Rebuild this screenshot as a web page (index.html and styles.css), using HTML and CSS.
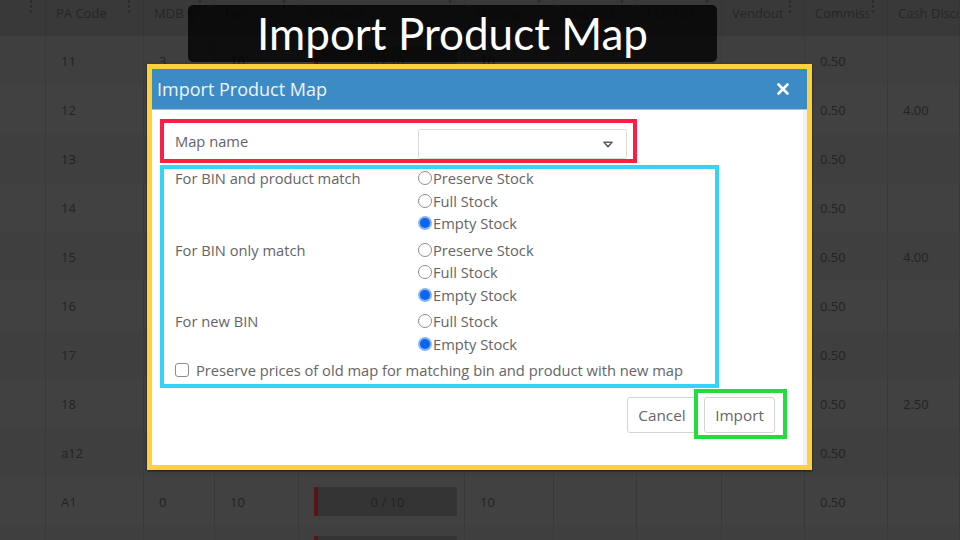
FILE: index.html
```html
<!DOCTYPE html>
<html>
<head>
<meta charset="utf-8">
<link rel="stylesheet" href="styles.css">
</head>
<body>
<div class="grid">
  <div class="row head">
    <div class="cell"><span class="lbl"></span><svg class="kebab" viewBox="0 0 4 14"><circle cx="2" cy="1.5" r="1.3"/><circle cx="2" cy="6.5" r="1.3"/><circle cx="2" cy="11.5" r="1.3"/></svg></div>
    <div class="cell"><span class="lbl">PA Code</span><svg class="kebab" viewBox="0 0 4 14"><circle cx="2" cy="1.5" r="1.3"/><circle cx="2" cy="6.5" r="1.3"/><circle cx="2" cy="11.5" r="1.3"/></svg></div>
    <div class="cell"><span class="lbl">MDB Qty</span><svg class="kebab" viewBox="0 0 4 14"><circle cx="2" cy="1.5" r="1.3"/><circle cx="2" cy="6.5" r="1.3"/><circle cx="2" cy="11.5" r="1.3"/></svg></div>
    <div class="cell"><span class="lbl">Par</span><svg class="kebab" viewBox="0 0 4 14"><circle cx="2" cy="1.5" r="1.3"/><circle cx="2" cy="6.5" r="1.3"/><circle cx="2" cy="11.5" r="1.3"/></svg></div>
    <div class="cell"><span class="lbl">On Hand</span><svg class="kebab" viewBox="0 0 4 14"><circle cx="2" cy="1.5" r="1.3"/><circle cx="2" cy="6.5" r="1.3"/><circle cx="2" cy="11.5" r="1.3"/></svg></div>
    <div class="cell"><span class="lbl">Missing</span><svg class="kebab" viewBox="0 0 4 14"><circle cx="2" cy="1.5" r="1.3"/><circle cx="2" cy="6.5" r="1.3"/><circle cx="2" cy="11.5" r="1.3"/></svg></div>
    <div class="cell"><span class="lbl">Last Pick</span><svg class="kebab" viewBox="0 0 4 14"><circle cx="2" cy="1.5" r="1.3"/><circle cx="2" cy="6.5" r="1.3"/><circle cx="2" cy="11.5" r="1.3"/></svg></div>
    <div class="cell"><span class="lbl">Min Pick</span><svg class="kebab" viewBox="0 0 4 14"><circle cx="2" cy="1.5" r="1.3"/><circle cx="2" cy="6.5" r="1.3"/><circle cx="2" cy="11.5" r="1.3"/></svg></div>
    <div class="cell"><span class="lbl">Vendout</span><svg class="kebab" viewBox="0 0 4 14"><circle cx="2" cy="1.5" r="1.3"/><circle cx="2" cy="6.5" r="1.3"/><circle cx="2" cy="11.5" r="1.3"/></svg></div>
    <div class="cell"><span class="lbl">Commission</span><svg class="kebab" viewBox="0 0 4 14"><circle cx="2" cy="1.5" r="1.3"/><circle cx="2" cy="6.5" r="1.3"/><circle cx="2" cy="11.5" r="1.3"/></svg></div>
    <div class="cell"><span class="lbl">Cash Discount</span></div>
  </div>

  <div class="row"><div class="cell"></div><div class="cell">11</div><div class="cell">3</div><div class="cell">10</div><div class="cell"><div class="bar">0 / 10</div></div><div class="cell">10</div><div class="cell"></div><div class="cell"></div><div class="cell"></div><div class="cell">0.50</div><div class="cell"></div></div>
  <div class="row alt"><div class="cell"></div><div class="cell">12</div><div class="cell">0</div><div class="cell">10</div><div class="cell"><div class="bar">0 / 10</div></div><div class="cell">10</div><div class="cell"></div><div class="cell"></div><div class="cell"></div><div class="cell">0.50</div><div class="cell">4.00</div></div>
  <div class="row"><div class="cell"></div><div class="cell">13</div><div class="cell">0</div><div class="cell">10</div><div class="cell"><div class="bar">0 / 10</div></div><div class="cell">10</div><div class="cell"></div><div class="cell"></div><div class="cell"></div><div class="cell">0.50</div><div class="cell"></div></div>
  <div class="row alt"><div class="cell"></div><div class="cell">14</div><div class="cell">0</div><div class="cell">10</div><div class="cell"><div class="bar">0 / 10</div></div><div class="cell">10</div><div class="cell"></div><div class="cell"></div><div class="cell"></div><div class="cell">0.50</div><div class="cell"></div></div>
  <div class="row"><div class="cell"></div><div class="cell">15</div><div class="cell">0</div><div class="cell">10</div><div class="cell"><div class="bar">0 / 10</div></div><div class="cell">10</div><div class="cell"></div><div class="cell"></div><div class="cell"></div><div class="cell">0.50</div><div class="cell">4.00</div></div>
  <div class="row alt"><div class="cell"></div><div class="cell">16</div><div class="cell">0</div><div class="cell">10</div><div class="cell"><div class="bar">0 / 10</div></div><div class="cell">10</div><div class="cell"></div><div class="cell"></div><div class="cell"></div><div class="cell">0.50</div><div class="cell"></div></div>
  <div class="row"><div class="cell"></div><div class="cell">17</div><div class="cell">0</div><div class="cell">10</div><div class="cell"><div class="bar">0 / 10</div></div><div class="cell">10</div><div class="cell"></div><div class="cell"></div><div class="cell"></div><div class="cell">0.50</div><div class="cell"></div></div>
  <div class="row alt"><div class="cell"></div><div class="cell">18</div><div class="cell">0</div><div class="cell">10</div><div class="cell"><div class="bar">0 / 10</div></div><div class="cell">10</div><div class="cell"></div><div class="cell"></div><div class="cell"></div><div class="cell">0.50</div><div class="cell">2.50</div></div>
  <div class="row"><div class="cell"></div><div class="cell">a12</div><div class="cell">0</div><div class="cell">10</div><div class="cell"><div class="bar">0 / 10</div></div><div class="cell">10</div><div class="cell"></div><div class="cell"></div><div class="cell"></div><div class="cell">0.50</div><div class="cell"></div></div>
  <div class="row alt"><div class="cell"></div><div class="cell">A1</div><div class="cell">0</div><div class="cell">10</div><div class="cell"><div class="bar">0 / 10</div></div><div class="cell">10</div><div class="cell"></div><div class="cell"></div><div class="cell"></div><div class="cell">0.50</div><div class="cell"></div></div>
  <div class="row"><div class="cell"></div><div class="cell"></div><div class="cell"></div><div class="cell"></div><div class="cell"><div class="bar"></div></div><div class="cell"></div><div class="cell"></div><div class="cell"></div><div class="cell"></div><div class="cell"></div><div class="cell"></div></div>
</div>

<div class="banner">Import Product Map</div>

<div class="dialog">
  <div class="dlg-head">
    <span class="dlg-title">Import Product Map</span>
    <svg class="close" viewBox="0 0 12 12"><path d="M1.5 1.5 L10.5 10.5 M10.5 1.5 L1.5 10.5"/></svg>
  </div>
  <div class="dlg-body">
    <div class="box-red">
      <div class="field-label">Map name</div>
      <div class="select">
        <svg class="caret" viewBox="0 0 10 7"><path d="M1 1.2 H9 L5 5.8 Z"/></svg>
      </div>
    </div>
    <div class="box-cyan">
      <div class="group first">
        <div class="glabel">For BIN and product match</div>
        <div class="opts">
          <div class="opt"><span class="radio"></span>Preserve Stock</div>
          <div class="opt"><span class="radio"></span>Full Stock</div>
          <div class="opt"><span class="radio on"></span>Empty Stock</div>
        </div>
      </div>
      <div class="group">
        <div class="glabel">For BIN only match</div>
        <div class="opts">
          <div class="opt"><span class="radio"></span>Preserve Stock</div>
          <div class="opt"><span class="radio"></span>Full Stock</div>
          <div class="opt"><span class="radio on"></span>Empty Stock</div>
        </div>
      </div>
      <div class="group">
        <div class="glabel">For new BIN</div>
        <div class="opts">
          <div class="opt"><span class="radio"></span>Full Stock</div>
          <div class="opt"><span class="radio on"></span>Empty Stock</div>
        </div>
      </div>
      <div class="check-row"><span class="checkbox"></span>Preserve prices of old map for matching bin and product with new map</div>
    </div>
    <div class="footer">
      <button class="btn">Cancel</button>
      <span class="mark-green"><button class="btn btn-import">Import</button></span>
    </div>
  </div>
</div>
</body>
</html>
```

FILE: styles.css
```css
html, body {
  margin: 0;
  padding: 0;
}
body {
  width: 960px;
  height: 540px;
  overflow: hidden;
  background: #3f3f3f;
  font-family: "Open Sans", "Noto Sans", sans-serif;
  position: relative;
}

/* background table */
.grid {
  display: flex;
  flex-direction: column;
  height: 540px;
  overflow: hidden;
}
.row {
  display: grid;
  grid-template-columns: 46px 98px 71px 84px 166px 89px 83px 85px 83px 83px 72px;
  height: 49px;
  flex: none;
  background: #3f3f3f;
}
.row.alt {
  background: #414141;
}
.row.head {
  height: 36px;
  background: #393939;
}
.cell {
  border-right: 1px solid #393939;
  display: flex;
  align-items: center;
  padding-left: 15px;
  font-size: 13px;
  color: #232323;
  white-space: nowrap;
  overflow: hidden;
  min-width: 0;
}
.head .cell {
  align-items: flex-start;
  padding-left: 10px;
  padding-top: 4px;
  line-height: 18px;
  color: #262626;
  border-right: 1px solid #353535;
}
.head .lbl {
  flex: 1;
  overflow: hidden;
  white-space: nowrap;
  min-width: 0;
}
.kebab {
  width: 4px;
  height: 14px;
  margin-top: -4px;
  margin-left: 2px;
  margin-right: 12px;
  flex: none;
  fill: #2a2a2a;
}
.bar {
  width: 143px;
  height: 29px;
  box-sizing: border-box;
  background: #343434;
  border-left: 4px solid #5a1414;
  display: flex;
  align-items: center;
  justify-content: center;
  color: #222;
  font-size: 13px;
}

/* title banner */
.banner {
  position: absolute;
  left: 188px;
  top: 5px;
  width: 529px;
  height: 57px;
  border-radius: 5px;
  background: rgba(0, 0, 0, 0.78);
  color: #ffffff;
  font-family: Lato, "Open Sans", sans-serif;
  font-size: 44px;
  line-height: 57px;
  text-align: center;
}

/* dialog */
.dialog {
  position: absolute;
  left: 147px;
  top: 64px;
  width: 665px;
  height: 406px;
  box-sizing: border-box;
  border: 5px solid #fdd13d;
  background: #ffffff;
  box-shadow: 0 1px 2px rgba(0, 0, 0, 0.6);
  display: flex;
  flex-direction: column;
}
.dlg-head {
  height: 41px;
  flex: none;
  background: #3d8bc4;
  display: flex;
  align-items: center;
  justify-content: space-between;
  padding: 0 18px 0 5px;
  border-bottom: 1px solid #9cc4e4;
  box-sizing: border-box;
}
.dlg-title {
  color: #eef4fa;
  font-size: 18px;
}
.close {
  width: 12px;
  height: 12px;
  stroke: #ffffff;
  stroke-width: 2.6;
  stroke-linecap: round;
  fill: none;
}
.dlg-body {
  flex: 1;
  padding: 9px 0 0 8px;
  border-right: 4px solid #f1f1f1;
  color: #656565;
  font-size: 14.7px;
}
.box-red {
  width: 477px;
  height: 44px;
  box-sizing: border-box;
  border: 4px solid #fb1e47;
  display: flex;
  align-items: flex-start;
}
.field-label {
  width: 254px;
  box-sizing: border-box;
  padding-left: 11px;
  margin-top: 7px;
  line-height: 22px;
}
.select {
  width: 209px;
  height: 30px;
  margin-top: 6px;
  box-sizing: border-box;
  border: 1px solid #dcdcdc;
  border-radius: 2px;
  display: flex;
  align-items: center;
  justify-content: flex-end;
  padding-right: 13px;
}
.caret {
  width: 10px;
  height: 7px;
  fill: none;
  stroke: #5e5e5e;
  stroke-width: 1.6;
  stroke-linejoin: round;
}
.box-cyan {
  margin-top: 2px;
  width: 559px;
  box-sizing: border-box;
  border: 4px solid #33d4f8;
  padding-bottom: 2px;
  display: flex;
  flex-direction: column;
  gap: 4px;
}
.group {
  display: flex;
}
.group.first {
  margin-top: -2px;
}
.glabel {
  width: 254px;
  box-sizing: border-box;
  padding-left: 11px;
  line-height: 22.5px;
  flex: none;
}
.opts {
  display: flex;
  flex-direction: column;
}
.opt {
  display: flex;
  align-items: center;
  height: 22.5px;
}
.radio {
  width: 14px;
  height: 14px;
  box-sizing: border-box;
  border-radius: 50%;
  border: 1px solid #8f8f8f;
  margin-right: 1px;
  flex: none;
}
.radio.on {
  border: 2px solid #86b4f3;
  background: #0b66ee;
}
.check-row {
  display: flex;
  align-items: center;
  height: 22.5px;
  padding-left: 11px;
}
.checkbox {
  width: 14px;
  height: 14px;
  box-sizing: border-box;
  border: 1px solid #8c8c8c;
  border-radius: 3px;
  margin-right: 7px;
  flex: none;
}
.footer {
  display: flex;
  justify-content: flex-end;
  gap: 7px;
  padding: 9px 28px 0 0;
}
.btn {
  height: 36px;
  box-sizing: border-box;
  border: 1px solid #d4d4d4;
  border-radius: 3px;
  background: #ffffff;
  color: #666666;
  font-family: "Open Sans", "Noto Sans", sans-serif;
  font-size: 15.3px;
  width: 70px;
  padding: 0;
}
.btn-import {
  width: 71px;
  display: block;
}
.mark-green {
  position: relative;
  display: block;
}
.mark-green::after {
  content: "";
  position: absolute;
  left: -10px;
  right: -12px;
  top: -8px;
  bottom: -6px;
  border: 4px solid #22dd3e;
  pointer-events: none;
}
```
